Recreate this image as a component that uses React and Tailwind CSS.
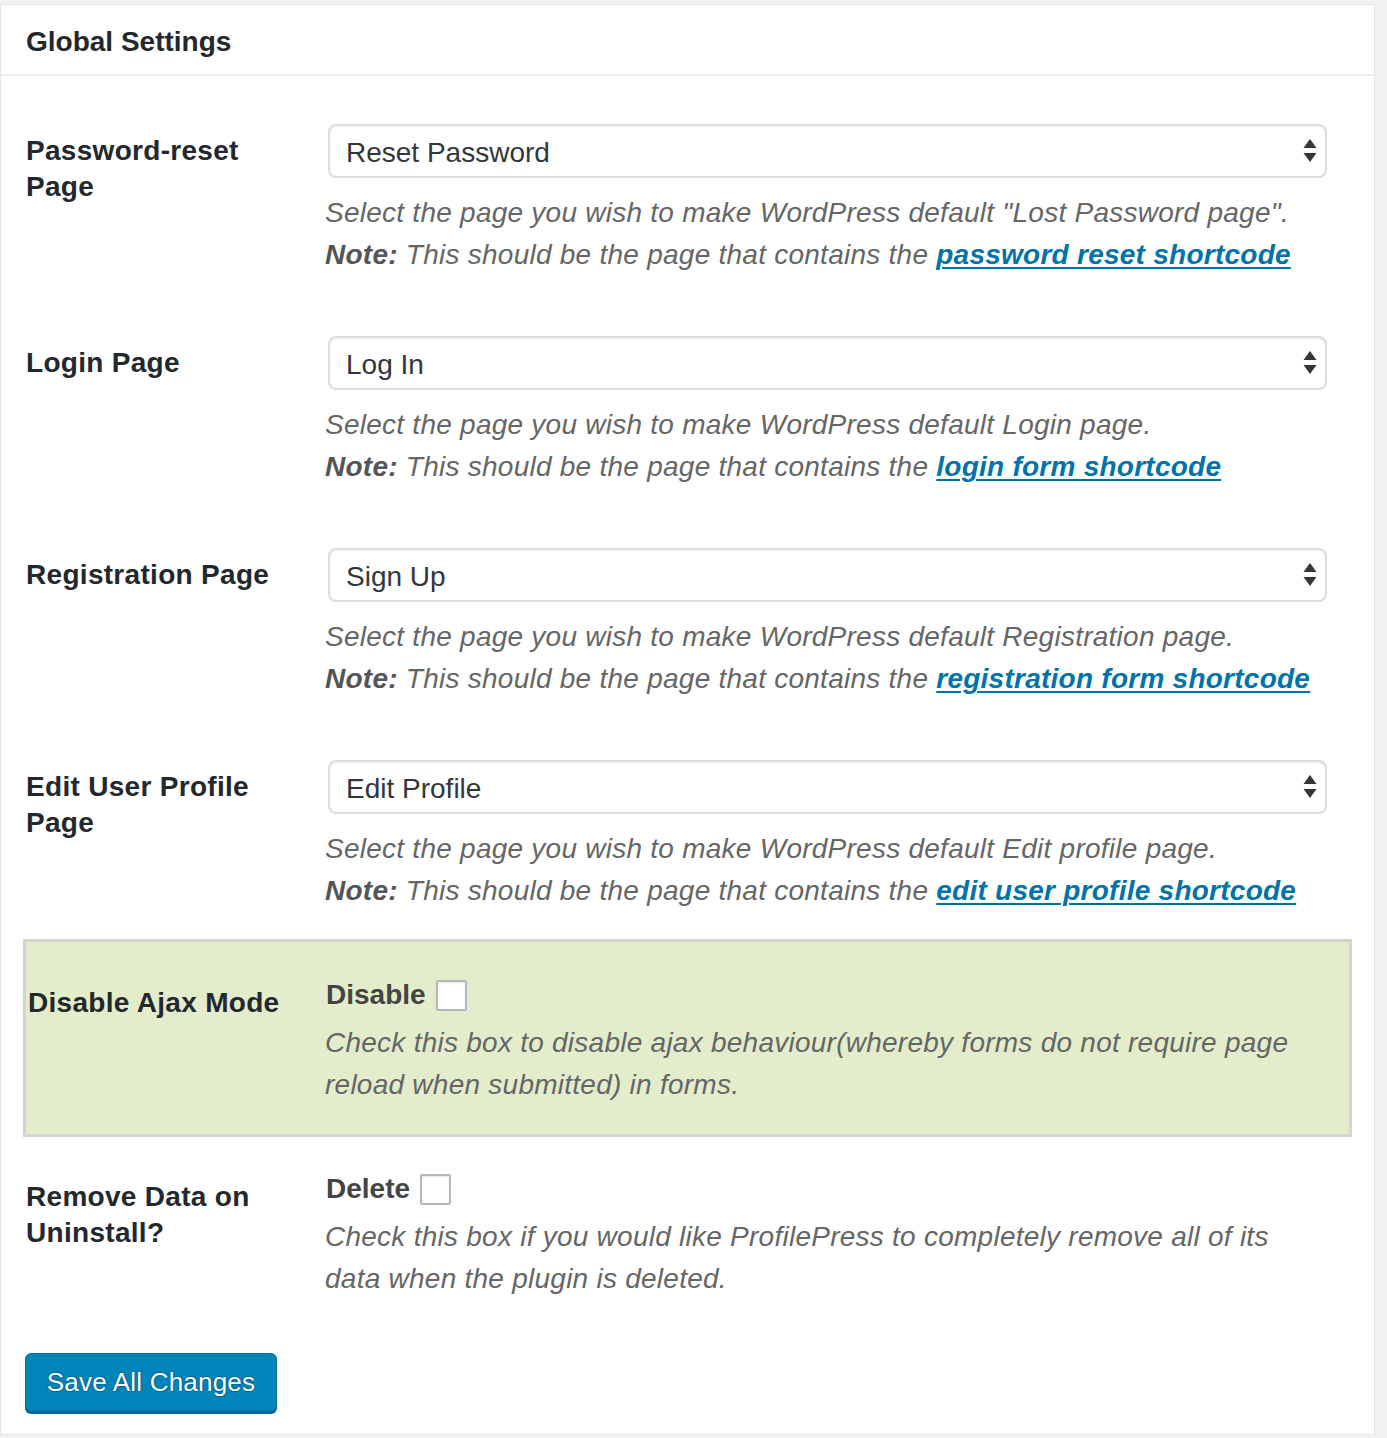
import React from "react";

const FONT = { fontFamily: '"Liberation Sans", Arial, Helvetica, sans-serif' };

function Arrows() {
  return (
    <svg width="14" height="24" viewBox="0 0 14 24" className="shrink-0">
      <polygon points="7,0 13.5,9 0.5,9" fill="#32373c" />
      <polygon points="0.5,14 13.5,14 7,23" fill="#32373c" />
    </svg>
  );
}

function SelectBox({ value }) {
  return (
    <div className="ml-[2px] w-[999px] h-[54px] rounded-[8px] border-2 border-[#ddd] bg-white shadow-[inset_0_1px_2px_rgba(0,0,0,0.07)] flex items-center justify-between pl-[16px] pr-[8px]">
      <span className="text-[28px] text-[#32373c] leading-none pt-[3px]">{value}</span>
      <Arrows />
    </div>
  );
}

function Desc({ children, className = "" }) {
  return (
    <div className={"text-[28px] tracking-[0.25px] leading-[42px] italic text-[#666] -ml-[1px] " + className}>{children}</div>
  );
}

function Note({ link }) {
  return (
    <div>
      <span className="font-bold text-[#555]">Note:</span> This should be the page that contains the{" "}
      <a href="#" className="font-bold text-[#0073aa] underline decoration-2 underline-offset-[3px]">{link}</a>
    </div>
  );
}

const LABEL = "text-[28px] tracking-[0.3px] leading-[36px] font-bold text-[#23282d]";

function SelectRow({ label, value, first, link, pb = "pb-[30px]" }) {
  return (
    <div className="flex">
      <div className={"w-[325px] shrink-0 pl-[25px] pt-[39px] pr-[20px] " + LABEL}>
        {label}
      </div>
      <div className={"pt-[30px] " + pb}>
        <SelectBox value={value} />
        <Desc className="mt-[14px]">
          <div>{first}</div>
          <Note link={link} />
        </Desc>
      </div>
    </div>
  );
}

function Checkbox() {
  return (
    <span className="inline-block w-[31px] h-[31px] border-2 border-[#b4b9be] bg-white rounded-[2px] shadow-[inset_0_1px_2px_rgba(0,0,0,0.1)] ml-[10px] align-middle" />
  );
}

export default function App() {
  return (
    <div className="min-h-screen bg-[#f1f1f1] pt-[4px]" style={FONT}>
      <div className="w-[1375px] bg-white border border-[#e5e5e5] pb-[23px]">
        <div className="h-[71px] flex items-center pl-[25px] pt-[4px] border-b-2 border-[#eee]">
          <h2 className="text-[28px] font-bold text-[#23282d]">Global Settings</h2>
        </div>
        <div className="pt-[18px]">
          <SelectRow
            label={<>Password-reset<br />Page</>}
            value="Reset Password"
            first={<>Select the page you wish to make WordPress default "Lost Password page".</>}
            link="password reset shortcode"
          />
          <SelectRow
            label="Login Page"
            value="Log In"
            first="Select the page you wish to make WordPress default Login page."
            link="login form shortcode"
          />
          <SelectRow
            label="Registration Page"
            value="Sign Up"
            first="Select the page you wish to make WordPress default Registration page."
            link="registration form shortcode"
          />
          <SelectRow
            label={<>Edit User Profile<br />Page</>}
            value="Edit Profile"
            first="Select the page you wish to make WordPress default Edit profile page."
            link="edit user profile shortcode"
            pb="pb-[27px]"
          />

          <div className="mx-[22px] border-[3px] border-[#d4d4d4] bg-[#e3edcc] flex">
            <div className={"w-[300px] shrink-0 pl-[2px] pt-[43px] " + LABEL}>
              Disable Ajax Mode
            </div>
            <div className="pt-[35px] pb-[28px]">
              <div className="text-[28px] leading-[36px] font-bold text-[#444] flex items-center">
                Disable<Checkbox />
              </div>
              <Desc className="mt-[9px]">
                <div>Check this box to disable ajax behaviour(whereby forms do not require page</div>
                <div>reload when submitted) in forms.</div>
              </Desc>
            </div>
          </div>

          <div className="flex">
            <div className={"w-[325px] shrink-0 pl-[25px] pt-[42px] " + LABEL}>
              Remove Data on<br />Uninstall?
            </div>
            <div className="pt-[34px]">
              <div className="text-[28px] leading-[36px] font-bold text-[#444] flex items-center">
                Delete<Checkbox />
              </div>
              <Desc className="mt-[9px]">
                <div>Check this box if you would like ProfilePress to completely remove all of its</div>
                <div>data when the plugin is deleted.</div>
              </Desc>
            </div>
          </div>

          <div className="pl-[24px] pt-[53px]">
            <button className="w-[252px] h-[58px] rounded-[6px] bg-[#0085ba] border border-[#0073aa] shadow-[0_3px_0_#006799] text-white text-[26px] tracking-[0.2px] [text-shadow:0_-1px_1px_#006799,1px_0_1px_#006799,0_1px_1px_#006799,-1px_0_1px_#006799] pt-[1px]">
              Save All Changes
            </button>
          </div>
        </div>
      </div>
    </div>
  );
}
